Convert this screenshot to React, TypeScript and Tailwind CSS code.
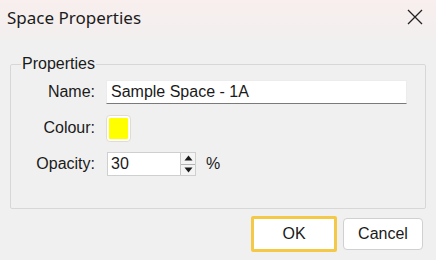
import React from "react";

const arial = "font-['Liberation_Sans',Arial,sans-serif]";

function Spinner() {
  return (
    <div className="flex flex-col w-[15px] h-[22px] border-l border-[#c8c8c8]">
      <button className="flex-1 flex items-center justify-center bg-[#f4f4f4] border-b border-[#b5b5b5]">
        <svg width="9" height="6" viewBox="0 0 9 6">
          <path d="M4.5 0.5 L8.5 5.5 L0.5 5.5 Z" fill="#1a1a1a" />
        </svg>
      </button>
      <button className="flex-1 flex items-center justify-center bg-[#f4f4f4]">
        <svg width="9" height="6" viewBox="0 0 9 6">
          <path d="M0.5 0.5 L8.5 0.5 L4.5 5.5 Z" fill="#1a1a1a" />
        </svg>
      </button>
    </div>
  );
}

export default function App() {
  return (
    <div className={`w-[436px] h-[260px] bg-[#f0f0f0] flex flex-col overflow-hidden ${arial}`}>
      {/* Title bar */}
      <div className="h-[40px] shrink-0 flex items-center justify-between pl-[7px] pr-[13px] bg-gradient-to-b from-[#f8efee] to-[#f2efef]">
        <span className="font-['Noto_Sans','Open_Sans',sans-serif] text-[17px] text-[#1b1b1b] leading-none -mt-[6px]">
          Space Properties
        </span>
        <svg width="16" height="16" viewBox="0 0 16 16" className="-mt-[7px]">
          <path d="M1 1 L15 15 M15 1 L1 15" stroke="#222" strokeWidth="1.3" />
        </svg>
      </div>

      {/* Properties group */}
      <fieldset className="mx-[10px] mt-[15px] border border-[#d7d7d7] pl-0 pr-[18px] pt-[7px] pb-[32px] rounded-[2px]">
        <legend className="ml-[10px] px-[1px] text-[16px] leading-[18px] text-[#1a1a1a]">Properties</legend>

        <div className="flex flex-col gap-[12px] text-[16px] text-[#1a1a1a]">
          <div className="flex items-center h-[24px]">
            <label className="w-[84px] text-right">Name:</label>
            <div className="ml-[11px] flex-1 h-[24px] bg-white border border-[#ececec] border-b-[#7a7a7a] flex items-center pl-[4px]">
              Sample Space - 1A
            </div>
          </div>

          <div className="flex items-center h-[24px]">
            <label className="w-[84px] text-right">Colour:</label>
            <div className="ml-[11px] w-[25px] h-[27px] rounded-[4px] border border-[#e3dccb] bg-white p-[2px] flex">
              <div className="flex-1 bg-[#ffff00] rounded-[1px]" />
            </div>
          </div>

          <div className="flex items-center h-[24px]">
            <label className="w-[84px] text-right">Opacity:</label>
            <div className="ml-[12px] w-[89px] h-[24px] bg-white border border-[#cfcfcf] flex items-center justify-between pl-[3px]">
              <span>30</span>
              <Spinner />
            </div>
            <span className="ml-[10px]">%</span>
          </div>
        </div>
      </fieldset>

      {/* Buttons */}
      <div className="flex justify-end items-center gap-[6px] pr-[13px] mt-[7px] text-[16px] text-[#1a1a1a]">
        <button className="w-[86px] h-[36px] bg-white border-[3px] border-[#f5c948] rounded-[2px] flex items-center justify-center">
          OK
        </button>
        <button className="w-[80px] h-[32px] bg-white border border-[#d0d0d0] rounded-[4px] flex items-center justify-center">
          Cancel
        </button>
      </div>
    </div>
  );
}
